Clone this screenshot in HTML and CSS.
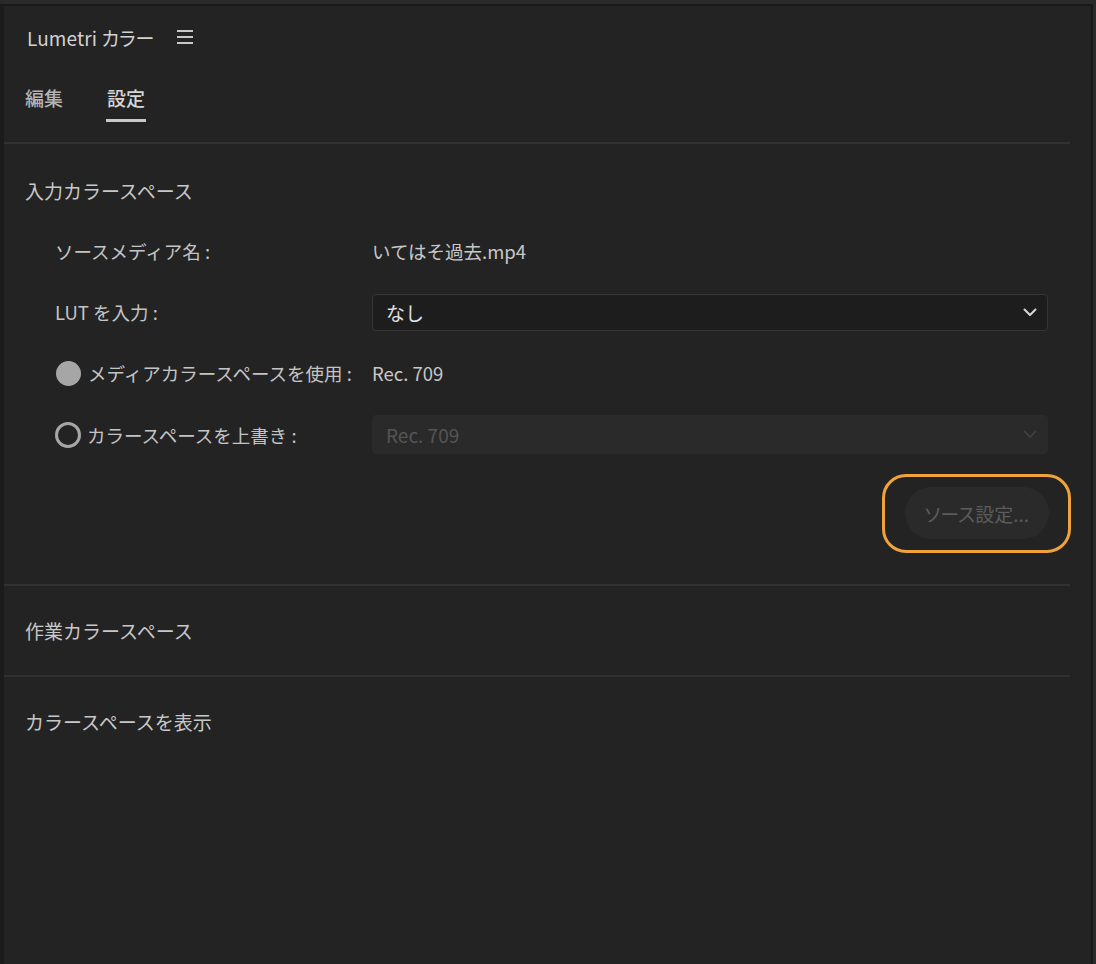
FILE: index.html
```html
<!DOCTYPE html>
<html lang="ja">
<head>
<meta charset="utf-8">
<link rel="stylesheet" href="styles.css">
</head>
<body>
<div class="frame">
  <div class="panel">
    <header class="panel-head">
      <div class="title-row">
        <span class="title">Lumetri カラー</span>
        <svg class="menu-icon" width="16" height="16" viewBox="0 0 16 16">
          <rect x="0" y="1" width="16" height="2" fill="#c8c8c8"/>
          <rect x="0" y="7" width="16" height="2" fill="#c8c8c8"/>
          <rect x="0" y="13" width="16" height="2" fill="#c8c8c8"/>
        </svg>
      </div>
      <nav class="tabs">
        <span class="tab">編集</span>
        <span class="tab active">設定</span>
      </nav>
    </header>

    <section class="section first">
      <h2 class="section-title">入力カラースペース</h2>
      <div class="rows">
        <div class="row">
          <span class="label">ソースメディア名 :</span>
          <span class="value">いてはそ過去.mp4</span>
        </div>
        <div class="row">
          <span class="label">LUT を入力 :</span>
          <div class="select">
            <span>なし</span>
            <svg class="chev" width="14" height="9" viewBox="0 0 14 9"><path d="M1.5 1.5 L7 7 L12.5 1.5" fill="none" stroke="#d8d8d8" stroke-width="2" stroke-linecap="round" stroke-linejoin="round"/></svg>
          </div>
        </div>
        <div class="row">
          <span class="label radio-label"><span class="radio filled"></span>メディアカラースペースを使用 :</span>
          <span class="value">Rec. 709</span>
        </div>
        <div class="row">
          <span class="label radio-label"><span class="radio ring"></span>カラースペースを上書き :</span>
          <div class="select disabled">
            <span>Rec. 709</span>
            <svg class="chev" width="14" height="9" viewBox="0 0 14 9"><path d="M1.5 1.5 L7 7 L12.5 1.5" fill="none" stroke="#3e3e3e" stroke-width="2" stroke-linecap="round" stroke-linejoin="round"/></svg>
          </div>
        </div>
      </div>
      <div class="btn-row">
        <div class="highlight">
          <button class="pill">ソース設定...</button>
        </div>
      </div>
    </section>

    <section class="section collapsed">
      <h2 class="section-title">作業カラースペース</h2>
    </section>

    <section class="section collapsed last">
      <h2 class="section-title">カラースペースを表示</h2>
    </section>
  </div>
</div>
</body>
</html>
```

FILE: styles.css
```css
* { box-sizing: border-box; }
html, body {
  margin: 0;
  padding: 0;
  background: #2a2a2a;
  width: 1096px;
  height: 964px;
  overflow: hidden;
}
body {
  font-family: "Noto Sans CJK JP", "Noto Sans", sans-serif;
  color: #c4c4c4;
}
.frame {
  padding-top: 4px;
  height: 964px;
}
.panel {
  height: 960px;
  width: 1093px;
  background: #232323;
  border-top: 2px solid #1a1a1a;
  border-left: 4px solid #1b1b1b;
  border-right: 2px solid #181818;
  padding-right: 21px;
}
.panel-head {
  padding: 0 0 0 21px;
  border-bottom: 2px solid #313131;
}
.title-row {
  display: flex;
  align-items: center;
  height: 62px;
  padding-left: 2px;
}
.title {
  font-size: 19px;
  font-feature-settings: "palt";
  color: #d2d2d2;
  letter-spacing: 0.1px;
}
.menu-icon { margin-left: 23px; }
.tabs {
  display: flex;
  gap: 43px;
  height: 74px;
  align-items: flex-start;
  padding-top: 14px;
}
.tab {
  font-size: 19px;
  color: #b4b4b4;
  font-weight: 500;
  height: 40px;
  line-height: 31px;
  padding: 0;
}
.tab.active {
  color: #d6d6d6;
  border-bottom: 3px solid #c8c8c8;
  padding: 0 1px;
}
.section {
  border-bottom: 2px solid #313131;
}
.section-title {
  margin: 0;
  font-weight: 400;
  font-size: 19px;
  color: #c8c8c8;
  padding-left: 21px;
  height: 30px;
  line-height: 30px;
}
.section.first { padding-top: 32px; height: 442px; }
.section.first .rows { padding-top: 26px; }
.section.collapsed { height: 91px; padding-top: 30px; }
.section.last { border-bottom: none; }
.rows {
  display: flex;
  flex-direction: column;
  gap: 23px;
  padding-left: 51px;
  padding-right: 22px;
}
.row {
  display: grid;
  grid-template-columns: 317px 1fr;
  align-items: center;
  height: 38px;
  font-size: 18.5px;
}
.label { color: #c4c4c4; white-space: nowrap; }
.value { color: #c8c8c8; font-size: 18.5px; }
.radio-label { display: flex; align-items: center; gap: 7px; margin-left: 0; }
.radio {
  width: 26px; height: 26px; border-radius: 50%;
  display: inline-block;
  flex: none;
}
.radio.filled { background: #a6a6a6; width: 25px; height: 25px; margin-left: 1px; }
.radio.ring { border: 3px solid #a6a6a6; margin-right: -1px; }
.select {
  display: flex;
  align-items: center;
  justify-content: space-between;
  height: 37px;
  background: #1d1d1d;
  border: 1px solid #363636;
  border-radius: 4px;
  padding: 0 10px 0 13px;
  color: #e0e0e0;
  font-size: 19px;
}
.select.disabled {
  background: #2a2a2a;
  border-color: #2a2a2a;
  color: #555;
  height: 39px;
}
.btn-row {
  display: flex;
  justify-content: flex-end;
  margin-top: 21px;
  margin-right: -1px;
}
.highlight {
  border: 3px solid #f0a23c;
  border-radius: 24px;
  padding: 10px 19px 11px 20px;
}
.pill {
  font-family: inherit;
  font-feature-settings: "palt";
  font-size: 19px;
  color: #5c5c5c;
  background: #2a2a2a;
  border: none;
  border-radius: 26px;
  height: 52px;
  padding: 0 20px;
  display: block;
}
```
